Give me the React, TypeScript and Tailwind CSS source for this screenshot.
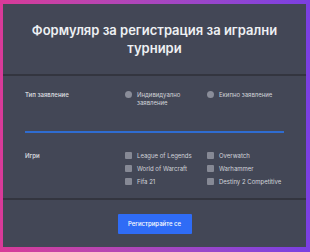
import React from "react";

export default function App() {
  const games = [
    ["League of Legends", "Overwatch"],
    ["World of Warcraft", "Warhammer"],
    ["Fifa 21", "Destiny 2 Competitive"],
  ];
  return (
    <div
      className="w-[310px] h-[252px] bg-gradient-to-r from-[#d83a98] to-[#7a3fe2] pt-[4px] pb-[5px] pl-[3px] pr-[4px]"
      style={{ fontFamily: "Inter, 'Noto Sans', sans-serif" }}
    >
      <div className="h-full bg-[#434756] flex flex-col">
        <div className="h-[72px] flex items-center justify-center px-2 border-b-2 border-[#33353f]">
          <h1 className="text-[13px] leading-[18px] font-semibold text-[#eef0f3] text-center">
            Формуляр за регистрация за игрални турнири
          </h1>
        </div>
        <div className="px-[22px] pt-[15px] flex-1 border-b-2 border-[#33353f]">
          <div className="grid grid-cols-[100px_1fr] text-[6px] leading-[8px] text-[#d2d4da]">
            <div className="font-semibold">Тип заявление</div>
            <div className="flex">
              <label className="flex items-start gap-[5px] w-[82px]">
                <span className="w-[7px] h-[7px] rounded-full bg-[#8a8d99] shrink-0" />
                <span>
                  Индивидуално
                  <br />
                  заявление
                </span>
              </label>
              <label className="flex items-start gap-[5px]">
                <span className="w-[7px] h-[7px] rounded-full bg-[#8a8d99] shrink-0" />
                <span className="whitespace-nowrap">Екипно заявление</span>
              </label>
            </div>
          </div>
          <div className="mt-[24px] h-[2px] bg-[#2f6cd0]" />
          <div className="mt-[18px] grid grid-cols-[100px_1fr] text-[6px] leading-[9px] text-[#d2d4da]">
            <div className="font-semibold">Игри</div>
            <div className="flex flex-col gap-[4px]">
              {games.map(([a, b]) => (
                <div key={a} className="flex">
                  <label className="flex items-center gap-[5px] w-[82px]">
                    <span className="w-[7px] h-[7px] bg-[#868995] rounded-[1px] shrink-0" />
                    <span className="whitespace-nowrap">{a}</span>
                  </label>
                  <label className="flex items-center gap-[5px]">
                    <span className="w-[7px] h-[7px] bg-[#868995] rounded-[1px] shrink-0" />
                    <span className="whitespace-nowrap">{b}</span>
                  </label>
                </div>
              ))}
            </div>
          </div>
        </div>
        <div className="h-[47px] flex items-center justify-center">
          <button className="w-[74px] h-[20px] bg-[#2f6cf6] text-white text-[6px] font-medium rounded-[1px]">
            Регистрирайте се
          </button>
        </div>
      </div>
    </div>
  );
}
